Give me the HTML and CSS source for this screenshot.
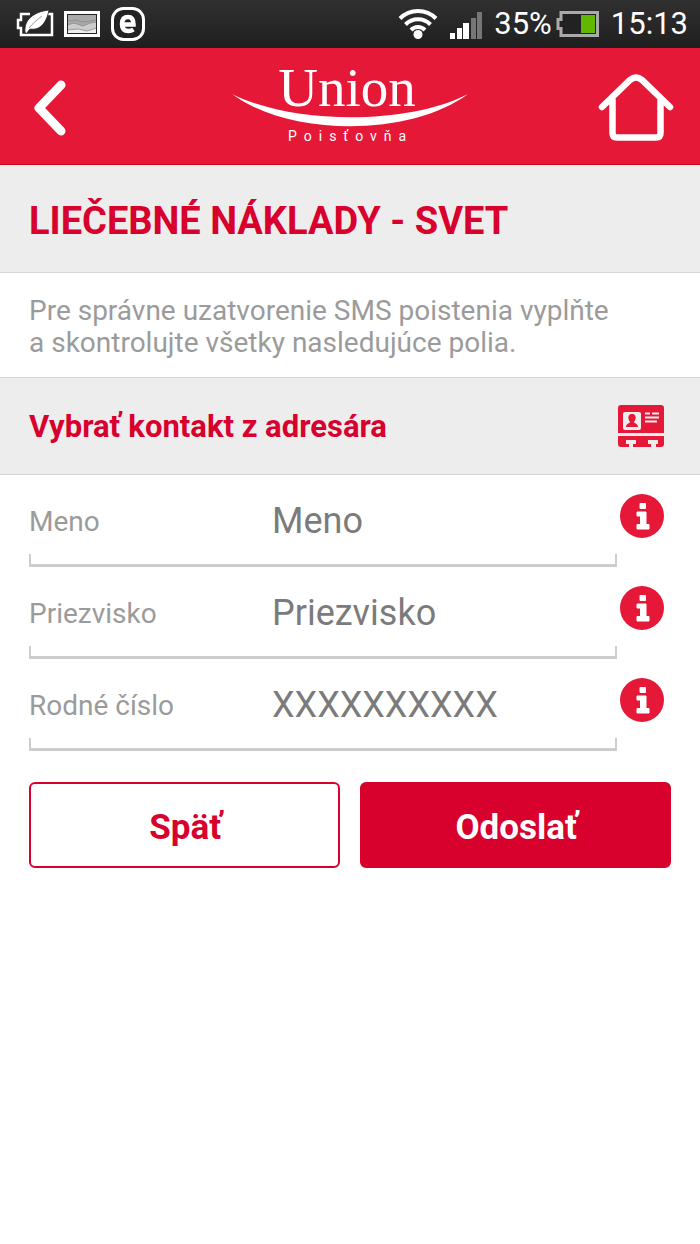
FILE: index.html
```html
<!DOCTYPE html>
<html lang="sk">
<head>
<meta charset="utf-8">
<meta name="viewport" content="width=device-width, initial-scale=1">
<title>Union Poisťovňa</title>
<link rel="stylesheet" href="styles.css">
</head>
<body>
<div class="status">
  <div class="status-group notices">
    <svg width="38" height="32" viewBox="0 0 38 32" aria-hidden="true">
      <path d="M14 6H5v6H2v8h3v7h31V6h-5" fill="none" stroke="#fff" stroke-width="2.5"/>
      <path d="M9 24C8 12 17 4 33 2c-2 11-8 21-19 19l-4 5z" fill="#fff" stroke="#222" stroke-width=".8"/>
      <path d="M13 20C17 15 21 12 26 8" fill="none" stroke="#999"/>
    </svg>
    <svg width="38" height="32" viewBox="0 0 38 32" aria-hidden="true">
      <rect x="2.500" y="4.500" width="33" height="23" fill="#aaa" stroke="#fff" stroke-width="3"/>
      <path d="M4 17l7-2 9 3 7-3 7-1v12H4z" fill="#ccc"/>
      <path d="M4 22l11-1 9 2 10-3v6H4z" fill="#eee"/>
      <path d="M4 13l9-1 7 2 14-2M4 17l7-2 9 3 7-3 7-1M4 22l11-1 9 2 10-3" fill="none" stroke="#888" stroke-width=".8"/>
      <rect x="4.500" y="6.500" width="29" height="19" fill="none" stroke="#222"/>
    </svg>
    <svg width="36" height="36" viewBox="0 0 36 36" aria-hidden="true">
      <rect x="2.500" y="2.500" width="31" height="31" rx="11" fill="#222" stroke="#fff" stroke-width="3"/>
      <path d="M12 18.500H23.500C23.500 13 21.500 11 18 11c-4 0-6 2.500-6 7 0 5 2.500 7 6.500 7 2 0 3.500-.5 5-1.500" fill="none" stroke="#fff" stroke-width="4.500"/>
    </svg>
  </div>
  <div class="status-group system">
    <svg width="40" height="32" viewBox="0 0 40 32" aria-hidden="true">
      <g fill="none" stroke="#fff" stroke-width="4">
        <path d="M2 10.500C12 .5 28 .5 38 10.500"/>
        <path d="M7.500 16.500C14.500 9.500 25.500 9.500 32.500 16.500"/>
        <path d="M13 22C17 18 23 18 27 22"/>
      </g>
      <circle cx="20" cy="26.500" r="4.500" fill="#fff"/>
    </svg>
    <svg class="signal" width="32" height="28" viewBox="0 0 32 28" aria-hidden="true">
      <path d="M0 21h5v6H0zM7 16h5v11H7zM13 11h6v16h-6z" fill="#fff"/>
      <path d="M21 6h5v21h-5zM27 0h5v27h-5z" fill="#777"/>
    </svg>
    <span>35%</span>
    <svg class="battery" width="43" height="26" viewBox="0 0 43 26" aria-hidden="true">
      <path d="M5 1.500h36.500v23H5v-7H2v-9h3z" fill="#222" stroke="#aaa" stroke-width="3"/>
      <path d="M25 4h14v18H25z" fill="#62b800"/>
    </svg>
    <span>15:13</span>
  </div>
</div>

<header class="topbar">
  <button class="icon-button" type="button" aria-label="Späť">
    <svg width="36" height="58" viewBox="0 0 36 58" aria-hidden="true">
      <path d="M29 7L7 30 29 53" fill="none" stroke="#fff" stroke-width="9" stroke-linecap="round" stroke-linejoin="round"/>
    </svg>
  </button>
  <svg class="brand" width="236" height="104" viewBox="0 -10 236 104" role="img" aria-label="Union Poisťovňa">
    <text class="brand-name" x="115" y="42" text-anchor="middle">Union</text>
    <path d="M0 30C58 73 178 73 236 30 176 61 62 61 0 30z" fill="#fff"/>
    <text class="brand-sub" x="56" y="77">Poisťovňa</text>
  </svg>
  <button class="icon-button home" type="button" aria-label="Domov">
    <svg width="76" height="70" viewBox="0 0 76 70" aria-hidden="true">
      <path d="M4 34L32 7Q38 2 44 7L72 34M14.500 27V60q0 4.500 4.500 4.500H58q4.500 0 4.500-4.500V27" fill="none" stroke="#fff" stroke-width="6.500" stroke-linecap="round"/>
    </svg>
  </button>
</header>

<main>
  <h1 class="band title">LIEČEBNÉ NÁKLADY - SVET</h1>
  <p class="intro">Pre správne uzatvorenie SMS poistenia vyplňte<br>a skontrolujte všetky nasledujúce polia.</p>
  <button class="band contact" type="button">
    <span>Vybrať kontakt z adresára</span>
    <svg width="46" height="42" viewBox="0 0 46 42" aria-hidden="true">
      <path d="M3 0h40q3 0 3 3v25H0V3q0-3 3-3zM0 31h46v8q0 3-3 3h-5v-3h2v-4h-10v4h3v3H15v-3h3v-4H8v4h3v3H3q-3 0-3-3z" fill="#e51937"/>
      <rect x="5" y="7" width="18" height="18" rx="2" fill="#eee"/>
      <path d="M14 9c-3 0-4 2-3.500 5 .3 1.500 1 2 1.500 3-.3 1.500-4 1.500-4 5h12c0-3.500-3.700-3.500-4-5 .5-1 1.200-1.500 1.500-3C18 11 17 9 14 9z" fill="#e51937"/>
      <path d="M27 8.500h5m2 0h7M27 12.500h14M27 16.500h12" stroke="#eee" stroke-width="2"/>
    </svg>
  </button>

  <form class="form">
    <div class="row">
      <div class="field"><label for="name">Meno</label><input id="name" type="text" placeholder="Meno"></div>
      <button class="info" type="button" aria-label="Informácie: Meno"><svg width="44" height="44" viewBox="0 0 44 44" aria-hidden="true"><circle cx="22" cy="22" r="22" fill="#e51937"/><path d="M20 9.500h5.500v5H20zM17 18h9v12.500h3V35H17v-4.500h3.500V22H17z" fill="#fff" stroke="#fff" stroke-linejoin="round"/></svg></button>
    </div>
    <div class="row">
      <div class="field"><label for="surname">Priezvisko</label><input id="surname" type="text" placeholder="Priezvisko"></div>
      <button class="info" type="button" aria-label="Informácie: Priezvisko"><svg width="44" height="44" viewBox="0 0 44 44" aria-hidden="true"><circle cx="22" cy="22" r="22" fill="#e51937"/><path d="M20 9.500h5.500v5H20zM17 18h9v12.500h3V35H17v-4.500h3.500V22H17z" fill="#fff" stroke="#fff" stroke-linejoin="round"/></svg></button>
    </div>
    <div class="row">
      <div class="field"><label for="birth">Rodné číslo</label><input id="birth" type="text" placeholder="XXXXXXXXXX"></div>
      <button class="info" type="button" aria-label="Informácie: Rodné číslo"><svg width="44" height="44" viewBox="0 0 44 44" aria-hidden="true"><circle cx="22" cy="22" r="22" fill="#e51937"/><path d="M20 9.500h5.500v5H20zM17 18h9v12.500h3V35H17v-4.500h3.500V22H17z" fill="#fff" stroke="#fff" stroke-linejoin="round"/></svg></button>
    </div>
    <div class="actions">
      <button class="action" type="button">Späť</button>
      <button class="action primary" type="submit">Odoslať</button>
    </div>
  </form>
</main>
</body>
</html>
```
FILE: styles.css
```css
* { box-sizing: border-box; }

body {
  margin: 0;
  background: #fff;
  font-family: Roboto, "Noto Sans", sans-serif;
}

button {
  margin: 0;
  padding: 0;
  border: 0;
  background: none;
  font: inherit;
  cursor: pointer;
}

svg { display: block; flex: none; }

.status {
  display: flex;
  justify-content: space-between;
  align-items: center;
  height: 48px;
  padding: 0 12px 0 16px;
  background: linear-gradient(#303030, #1f1f1f);
  color: #fff;
  font-size: 31px;
  line-height: 50px;
}

.status-group { display: flex; align-items: center; }
.notices { gap: 9px; }
.system { gap: 12px; }
.signal { margin-top: 4px; }
.battery { margin-left: -8px; }

.topbar {
  display: flex;
  justify-content: space-between;
  align-items: center;
  height: 117px;
  padding: 0 26px;
  background: #e51937;
  border-bottom: 1px solid #d9001b;
}

.icon-button {
  display: flex;
  width: 76px;
  padding: 2px 0 0 6px;
}

.home { padding: 4px 0 0; }

.brand-name {
  fill: #fff;
  font-family: "Liberation Serif", serif;
  font-size: 55px;
}

.brand-sub {
  fill: #fff;
  font-family: "Liberation Sans Narrow", Roboto, sans-serif;
  font-size: 14px;
  letter-spacing: 7px;
}

.band {
  background: #ededed;
  border-bottom: 1px solid #d6d6d6;
  color: #d8002c;
  font-weight: 700;
}

.title {
  margin: 0;
  padding: 34px 29px 29px;
  font-size: 38px;
  line-height: 44px;
}

.intro {
  margin: 0;
  padding: 22px 29px 18px;
  border-bottom: 1px solid #d6d6d6;
  color: #9b9b9b;
  font-size: 28px;
  line-height: 32px;
}

.contact {
  display: flex;
  justify-content: space-between;
  align-items: center;
  width: 100%;
  height: 97px;
  padding: 0 36px 0 29px;
  font-size: 31px;
  text-align: left;
}

.form { padding: 0 29px; }

.row {
  display: flex;
  align-items: center;
  gap: 3px;
  padding-right: 7px;
}

.field {
  position: relative;
  display: flex;
  flex: 1;
  align-items: center;
  min-width: 0;
  height: 92px;
}

.field::after {
  content: "";
  position: absolute;
  inset: auto 0 0;
  height: 10px;
  border: solid #cdcdcd;
  border-width: 0 2px 3px;
  pointer-events: none;
}

.field label {
  flex: none;
  width: 243px;
  color: #9b9b9b;
  font-size: 28px;
}

.field input {
  flex: 1;
  min-width: 0;
  height: 80px;
  padding: 0;
  border: 0;
  outline: 0;
  background: none;
  color: #7b7b7b;
  font: 36px Roboto, sans-serif;
}

.field input::placeholder { color: #7b7b7b; opacity: 1; }

.info { margin-bottom: 10px; }

.actions {
  display: flex;
  gap: 20px;
  margin-top: 31px;
}

.action {
  flex: 1;
  height: 86px;
  padding: 4px 0 0 2px;
  border: 2px solid #d8002c;
  border-radius: 6px;
  color: #d8002c;
  font-size: 35px;
  font-weight: 700;
}

.primary { background: #d8002c; color: #fff; }
```
